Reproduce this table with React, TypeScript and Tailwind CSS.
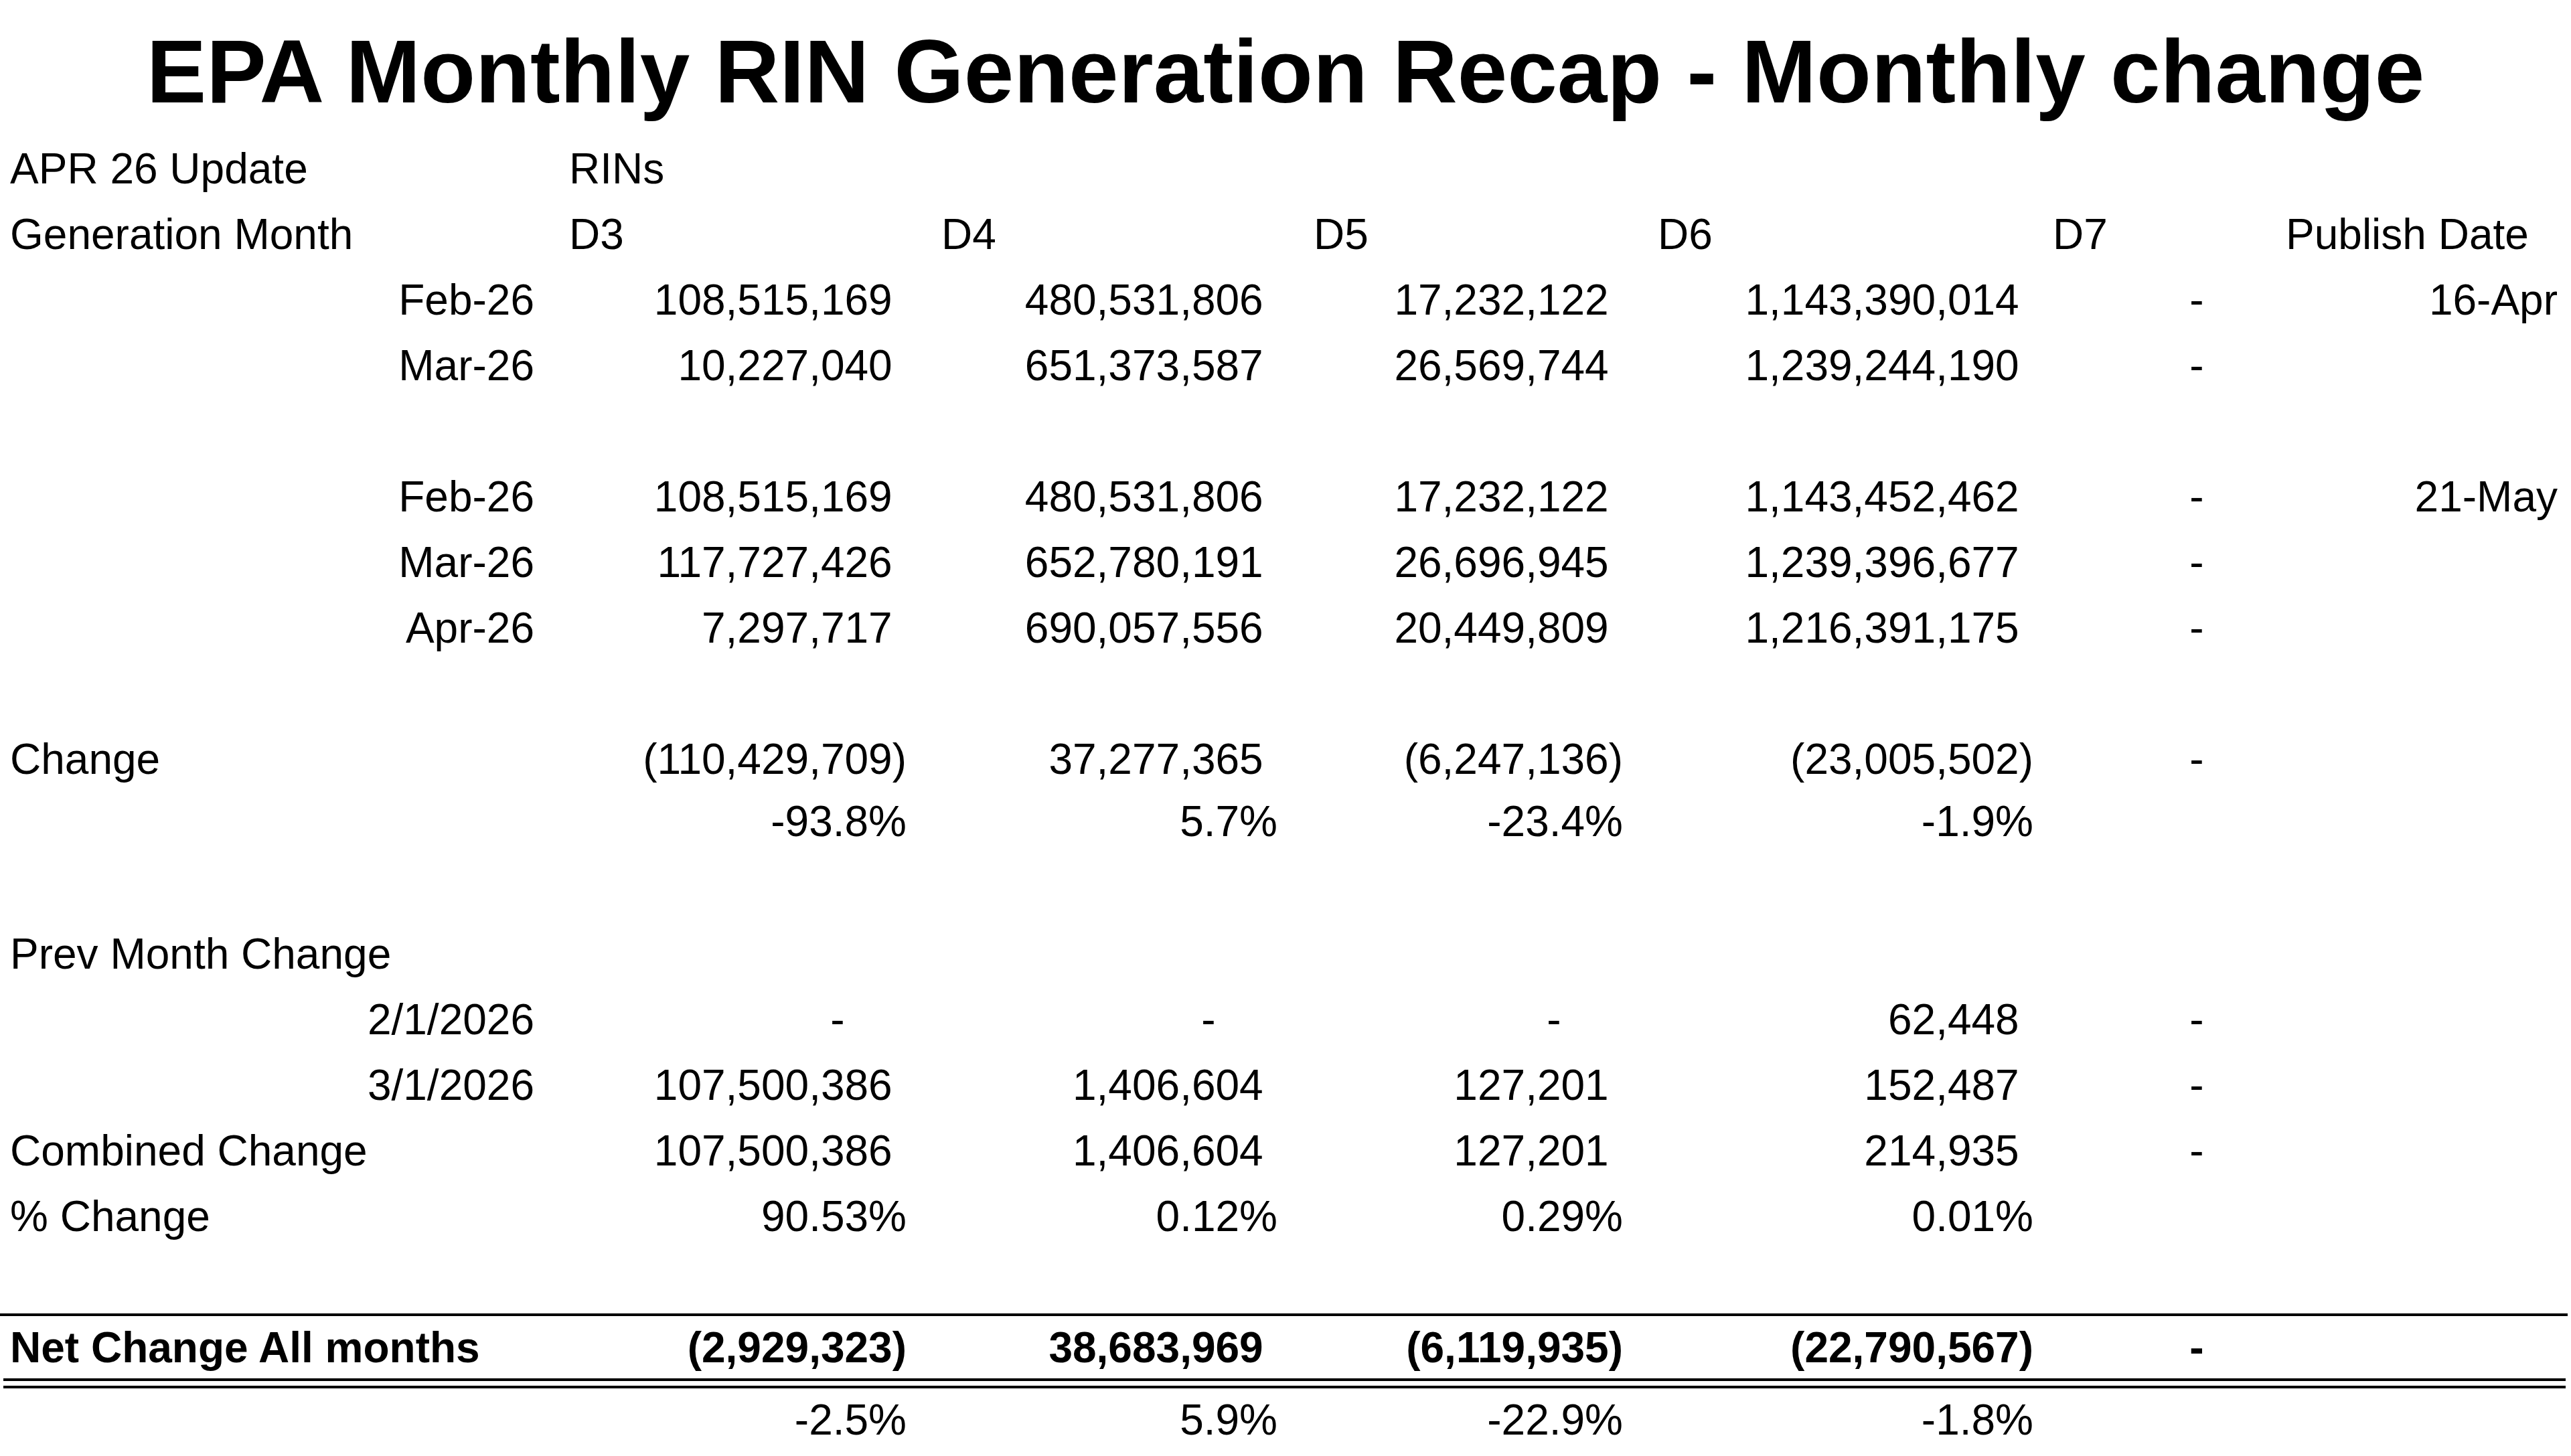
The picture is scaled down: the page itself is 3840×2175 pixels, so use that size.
type Kind = "label" | "month" | "head" | "num" | "neg" | "dash" | "pct" | "date" | "";
type Cell = [Kind, string];

const E: Cell = ["", ""];
const d: Cell = ["dash", "-"];
const n = (t: string): Cell => ["num", t];
const ng = (t: string): Cell => ["neg", t];
const p = (t: string): Cell => ["pct", t];

// left padding of the header text in each column
const headPad = ["", "pl-[30px]", "pl-[52px]", "pl-[54px]", "pl-[52px]", "pl-[29px]", "pl-[30px]"];

const grid =
  "grid grid-cols-[820px_534px_554px_516px_613px_347px_438px] items-center whitespace-nowrap";

function CellView({ cell, col }: { cell: Cell; col: number }) {
  const [kind, t] = cell;
  if (kind === "label") return <div className="pl-[15px] text-left">{t}</div>;
  if (kind === "month") return <div className="pr-[22px] text-right">{t}</div>;
  if (kind === "head") return <div className={`${headPad[col]} text-left`}>{t}</div>;
  if (kind === "num")
    return (
      <div className="text-right">
        {t}
        <span className="invisible">)</span>
      </div>
    );
  if (kind === "dash")
    return (
      <div className="text-right">
        -<span className="invisible">00)</span>
      </div>
    );
  if (kind === "neg" || kind === "pct") return <div className="text-right">{t}</div>;
  if (kind === "date") return <div className="pr-[2px] text-right">{t}</div>;
  return <div />;
}

function Row({ cells, h = "h-[98px]", bold = false }: { cells: Cell[]; h?: string; bold?: boolean }) {
  const full = [...cells];
  while (full.length < 7) full.push(E);
  return (
    <div className={`${grid} ${h} ${bold ? "font-bold" : ""}`}>
      {full.map((c, i) => (
        <CellView key={i} cell={c} col={i} />
      ))}
    </div>
  );
}

export default function App() {
  return (
    <div className="w-[3840px] h-[2175px] overflow-hidden bg-white text-black font-['Liberation_Sans',Arial,sans-serif] text-[64px] leading-none">
      {/* Title */}
      <div className="h-[203px] pt-[7px] text-center text-[134px] font-bold leading-[200px] whitespace-nowrap">
        EPA Monthly RIN Generation Recap - Monthly change
      </div>

      <Row cells={[["label", "APR 26 Update"], ["head", "RINs"]]} />
      <Row
        cells={[
          ["label", "Generation Month"],
          ["head", "D3"],
          ["head", "D4"],
          ["head", "D5"],
          ["head", "D6"],
          ["head", "D7"],
          ["head", "Publish Date"],
        ]}
      />
      <Row
        cells={[["month", "Feb-26"], n("108,515,169"), n("480,531,806"), n("17,232,122"), n("1,143,390,014"), d, ["date", "16-Apr"]]}
      />
      <Row cells={[["month", "Mar-26"], n("10,227,040"), n("651,373,587"), n("26,569,744"), n("1,239,244,190"), d]} />
      <div className="h-[98px]" />
      <Row
        cells={[["month", "Feb-26"], n("108,515,169"), n("480,531,806"), n("17,232,122"), n("1,143,452,462"), d, ["date", "21-May"]]}
      />
      <Row cells={[["month", "Mar-26"], n("117,727,426"), n("652,780,191"), n("26,696,945"), n("1,239,396,677"), d]} />
      <Row cells={[["month", "Apr-26"], n("7,297,717"), n("690,057,556"), n("20,449,809"), n("1,216,391,175"), d]} />
      <div className="h-[98px]" />

      <Row cells={[["label", "Change"], ng("(110,429,709)"), n("37,277,365"), ng("(6,247,136)"), ng("(23,005,502)"), d]} />
      <Row h="h-[88px]" cells={[E, p("-93.8%"), p("5.7%"), p("-23.4%"), p("-1.9%")]} />
      <div className="h-[105px]" />

      <Row cells={[["label", "Prev Month Change"]]} />
      <Row cells={[["month", "2/1/2026"], d, d, d, n("62,448"), d]} />
      <Row cells={[["month", "3/1/2026"], n("107,500,386"), n("1,406,604"), n("127,201"), n("152,487"), d]} />
      <Row cells={[["label", "Combined Change"], n("107,500,386"), n("1,406,604"), n("127,201"), n("214,935"), d]} />
      <Row cells={[["label", "% Change"], p("90.53%"), p("0.12%"), p("0.29%"), p("0.01%")]} />
      <div className="h-[96px]" />

      {/* Net change with top rule and double underline */}
      <div className="w-[3835px] border-t-4 border-black">
        <Row
          bold
          h="h-[93px]"
          cells={[["label", "Net Change All months"], ng("(2,929,323)"), n("38,683,969"), ng("(6,119,935)"), ng("(22,790,567)"), d]}
        />
      </div>
      <div className="ml-[5px] w-[3827px] h-[15px] border-y-4 border-black" />
      <Row h="h-[94px]" cells={[E, p("-2.5%"), p("5.9%"), p("-22.9%"), p("-1.8%")]} />
    </div>
  );
}
